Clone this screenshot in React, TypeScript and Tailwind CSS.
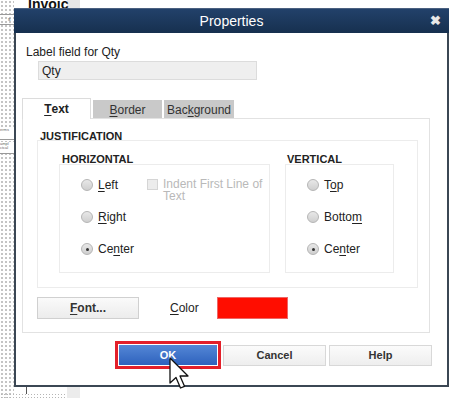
import React from "react";

const F = { fontFamily: '"Liberation Sans", Arial, sans-serif' };

function Radio({ checked }: { checked?: boolean }) {
  return (
    <span className="relative inline-block w-[12px] h-[12px] rounded-full border border-[#b5b5b5] bg-[linear-gradient(#e8e8e8,#cfcfcf)]">
      {checked && (
        <span className="absolute left-[3.5px] top-[3.5px] w-[3px] h-[3px] rounded-full bg-[#333]" />
      )}
    </span>
  );
}

function RadioRow({ checked, children }: { checked?: boolean; children: React.ReactNode }) {
  return (
    <div className="h-[32px] flex items-center gap-[5px]">
      <Radio checked={checked} />
      <span className="text-[12px] leading-[14px] text-[#222]">{children}</span>
    </div>
  );
}

const U = ({ children }: { children: React.ReactNode }) => (
  <span className="underline underline-offset-[2px] decoration-[1px]">{children}</span>
);

export default function App() {
  return (
    <div className="relative w-[460px] h-[398px] bg-white overflow-hidden" style={F}>
      {/* background document */}
      <div className="absolute left-0 top-0 w-[14px] h-[398px] bg-[radial-gradient(#c4c4c4_0.9px,transparent_1px)] bg-[length:4px_4px]" />
      <div className="absolute left-0 top-[14px] w-[14px] h-px bg-[#9a9a9a]" />
      <div className="absolute left-0 top-[24px] w-[14px] h-px bg-[#9a9a9a]" />
      <div className="absolute left-[8px] top-[16px] text-[5px] text-[#555]">s</div>
      <div className="absolute left-0 top-[128px] w-[14px] h-[12px] text-[4px] leading-[4px] text-[#666] bg-white border-b border-[#999]">erms</div>
      <div className="absolute left-0 top-[142px] w-[14px] h-[12px] text-[4px] leading-[4px] text-[#666] bg-white border-b border-[#999]">ampl ctcal</div>
      <div className="absolute left-[67px] top-0 w-[13px] h-[9px] bg-[#e6e6e6]" />
      <div className="absolute left-[28px] top-[-3px] text-[14px] font-bold text-[#111] leading-[15px]">Invoic</div>
      <div className="absolute left-[26px] top-[386px] w-px h-[8px] bg-[#555]" />
      <div className="absolute left-0 top-[393px] w-[67px] h-[5px] bg-[radial-gradient(#b5b5b5_0.8px,transparent_0.9px)] bg-[length:3px_3px]" />
      <div className="absolute left-[67px] top-[386px] w-[13px] h-[12px] bg-[#ececec]" />

      {/* dialog */}
      <div className="absolute left-[14px] top-[8px] w-[435px] h-[379px] bg-white border-x-2 border-b-2 border-[#3b4754] flex flex-col">
        <div className="relative h-[25px] -mx-[2px] bg-[linear-gradient(#22416a,#16304f)] border-t border-[#4a6080] flex items-center justify-center">
          <span className="text-white text-[14px]">Properties</span>
          <span className="absolute right-[8px] top-[5px] text-[#e8e8e8] text-[13px] font-bold leading-[14px]">✖</span>
        </div>

        <div className="mt-[12px] ml-[10px] text-[12px] leading-[14px] text-[#222]">Label field for Qty</div>
        <div className="mt-[2px] ml-[22px] w-[219px] h-[19px] bg-[#efefef] border border-[#dcdcdc] flex items-center pl-[3px] text-[12px] text-[#222]">
          Qty
        </div>

        {/* tabs */}
        <div className="mt-[19px] ml-[6px] flex items-end gap-[2px] h-[20px]">
          <div className="relative z-10 w-[69px] h-[21px] bg-white border-x border-t border-[#dcdcdc] flex items-center justify-center text-[12px] font-bold text-[#222]">
            <U>T</U>ext
          </div>
          <div className="w-[69px] h-[19px] bg-[#c9c9c9] flex items-center justify-center text-[12px] text-[#333]">
            <U>B</U>order
          </div>
          <div className="w-[70px] h-[19px] bg-[#c9c9c9] flex items-center justify-center text-[12px] text-[#333]">
            Bac<U>k</U>ground
          </div>
        </div>

        {/* panel */}
        <div className="-mt-px ml-[6px] w-[408px] h-[215px] border border-[#e2e2e2] flex flex-col">
          <div className="mt-[11px] ml-[17px] text-[11px] leading-[12px] font-bold text-[#222]">JUSTIFICATION</div>
          <div className="mt-[-2px] ml-[14px] w-[381px] h-[148px] border border-[#ececec] flex">
            {/* horizontal */}
            <div className="ml-[21px] flex flex-col">
              <div className="mt-[12px] ml-[3px] text-[11px] leading-[12px] font-bold text-[#222]">HORIZONTAL</div>
              <div className="mt-[-1px] w-[211px] h-[109px] border border-[#ececec] flex">
                <div className="ml-[21px] pt-[4px] w-[66px] flex flex-col">
                  <RadioRow><U>L</U>eft</RadioRow>
                  <RadioRow><U>R</U>ight</RadioRow>
                  <RadioRow checked>Ce<U>n</U>ter</RadioRow>
                </div>
                <div className="mt-[13px] flex items-start gap-[5px]">
                  <span className="mt-[1px] w-[11px] h-[11px] border border-[#d5d5d5] bg-[#ececec]" />
                  <span className="text-[12px] leading-[12px] text-[#b9b9b9] w-[100px]">Indent First Line of Text</span>
                </div>
              </div>
            </div>
            {/* vertical */}
            <div className="ml-[15px] flex flex-col">
              <div className="mt-[12px] ml-[2px] text-[11px] leading-[12px] font-bold text-[#222]">VERTICAL</div>
              <div className="mt-[-1px] w-[109px] h-[109px] border border-[#ececec] flex">
                <div className="ml-[21px] pt-[4px] flex flex-col">
                  <RadioRow>T<U>o</U>p</RadioRow>
                  <RadioRow>Botto<U>m</U></RadioRow>
                  <RadioRow checked>Ce<U>n</U>ter</RadioRow>
                </div>
              </div>
            </div>
          </div>
          <div className="mt-[9px] ml-[14px] flex items-center">
            <div className="w-[102px] h-[22px] border border-[#d0d0d0] bg-[linear-gradient(#fafafa,#ececec)] flex items-center justify-center text-[12px] font-bold text-[#333]">
              <U>F</U>ont...
            </div>
            <span className="ml-[31px] text-[12px] text-[#222]"><U>C</U>olor</span>
            <div className="ml-[18px] w-[71px] h-[22px] bg-[#ff0d00] border border-[#e66]" />
          </div>
        </div>

        {/* buttons */}
        <div className="mt-[8px] ml-[99px] flex items-center">
          <div className="w-[106px] h-[28px] border-[3px] border-[#e3202a] p-px">
            <div className="w-full h-full bg-[linear-gradient(#5487d6,#2e62bd)] flex items-center justify-center text-white text-[11px] font-bold">
              OK
            </div>
          </div>
          <div className="ml-[2px] w-[103px] h-[21px] border border-[#d8d8d8] bg-[linear-gradient(#fbfbfb,#eeeeee)] flex items-center justify-center text-[11px] font-bold text-[#333]">
            Cancel
          </div>
          <div className="ml-[3px] w-[103px] h-[21px] border border-[#d8d8d8] bg-[linear-gradient(#fbfbfb,#eeeeee)] flex items-center justify-center text-[11px] font-bold text-[#333]">
            Help
          </div>
        </div>
      </div>

      {/* cursor */}
      <svg className="absolute left-[169px] top-[357px]" width="26" height="36" viewBox="0 0 26 36">
        <path d="M1 1 L1 26 L7 20.5 L11.5 31 L15.5 29.3 L11 19 L19 19 Z" fill="#fff" stroke="#111" strokeWidth="1.3" strokeLinejoin="round" />
      </svg>
    </div>
  );
}
